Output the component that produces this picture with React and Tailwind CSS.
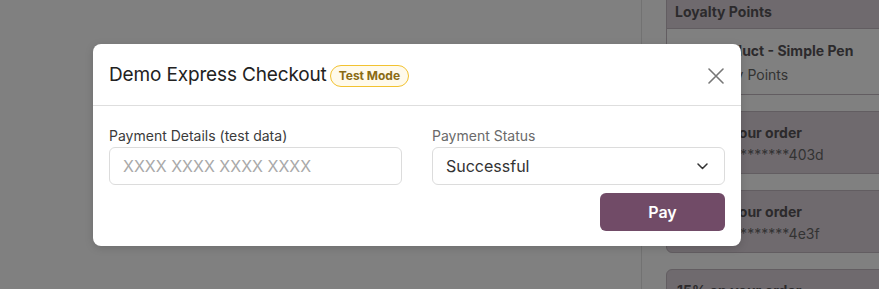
import React from "react";

const rewards = [
  { title: "10% on your order", code: "****************403d" },
  { title: "10% on your order", code: "****************4e3f" },
  { title: "15% on your order", code: "****************9a1c" },
];

function CloseIcon() {
  return (
    <svg width="16" height="16" viewBox="0 0 16 16" fill="none">
      <path d="M1 1L15 15M15 1L1 15" stroke="#777" strokeWidth="1.6" strokeLinecap="round" />
    </svg>
  );
}

function Chevron() {
  return (
    <svg width="11" height="7" viewBox="0 0 11 7" fill="none">
      <path d="M1 1l4.5 4.5L10 1" stroke="#333" strokeWidth="1.5" strokeLinecap="round" strokeLinejoin="round" />
    </svg>
  );
}

export default function App() {
  return (
    <div
      className="relative w-[879px] h-[289px] overflow-hidden bg-[#808080]"
      style={{ fontFamily: "Inter, 'Noto Sans', sans-serif" }}
    >
      {/* page behind the overlay */}
      <div className="flex h-full">
        <div className="w-[642px] shrink-0 border-r border-[#727272]" />
        <div className="flex flex-col pl-[24px] w-[260px] shrink-0 text-[14px] text-[#2c2a2c]">
          <div className="border-x border-b border-[#625d61]">
            <div className="h-[29px] flex items-center px-2 pb-[5px] bg-[#6f6a6e] border-b border-[#625d61] font-bold">
              Loyalty Points
            </div>
            <div className="h-[65px] px-[10px] pt-[11px] leading-[22px]">
              <div className="font-bold">Free Product - Simple Pen</div>
              <div className="mt-[2px] text-[#333]">10 Loyalty Points</div>
            </div>
          </div>
          {rewards.map((r, i) => (
            <div
              key={i}
              className="mt-[16px] h-[63px] shrink-0 rounded-md border border-[#625d61] bg-[#6f6a6e] px-[10px] pt-[10px] leading-[22px]"
            >
              <div className="font-bold whitespace-nowrap">{r.title}</div>
              <div className="text-[#333] whitespace-nowrap">{r.code}</div>
            </div>
          ))}
        </div>
      </div>

      {/* modal */}
      <div className="absolute left-[93px] top-[44px] w-[648px] h-[202px] bg-white rounded-lg shadow-[0_2px_8px_rgba(0,0,0,0.15)]">
        <div className="h-[62px] flex items-center justify-between pl-4 pr-[17px] pt-[2px] border-b border-[#dedede]">
          <div className="flex items-center gap-[3px]">
            <h2 className="text-[19px] text-[#222] tracking-[-0.15px]">Demo Express Checkout</h2>
            <span className="h-[22px] px-[8px] flex items-center rounded-full border border-[#f2c230] bg-[#fffaeb] text-[12px] font-bold text-[#8a6b14]">
              Test Mode
            </span>
          </div>
          <button className="w-[16px] h-[16px] flex items-center justify-center">
            <CloseIcon />
          </button>
        </div>

        <div className="px-4 pt-[19px] pb-[15px]">
          <div className="grid grid-cols-2 gap-x-[30px]">
            <div>
              <label className="block text-[14px] leading-[21px] text-[#3b3b3b] mb-[1px]">
                Payment Details (test data)
              </label>
              <input
                type="text"
                placeholder="XXXX XXXX XXXX XXXX"
                className="w-full h-[38px] rounded-md border border-[#dcdcdc] px-[13px] text-[16px] text-[#333] placeholder:text-[#a9a9a9] outline-none"
              />
            </div>
            <div>
              <label className="block text-[14px] leading-[21px] text-[#6a6a6a] mb-[1px]">
                Payment Status
              </label>
              <div className="w-full h-[38px] rounded-md border border-[#dcdcdc] pl-[13px] pr-[16px] flex items-center justify-between text-[16px] text-[#333]">
                <span>Successful</span>
                <Chevron />
              </div>
            </div>
          </div>
          <div className="flex justify-end mt-2">
            <button className="w-[125px] h-[38px] rounded-md bg-[#714b67] text-white text-[16px] font-semibold">
              Pay
            </button>
          </div>
        </div>
      </div>
    </div>
  );
}
